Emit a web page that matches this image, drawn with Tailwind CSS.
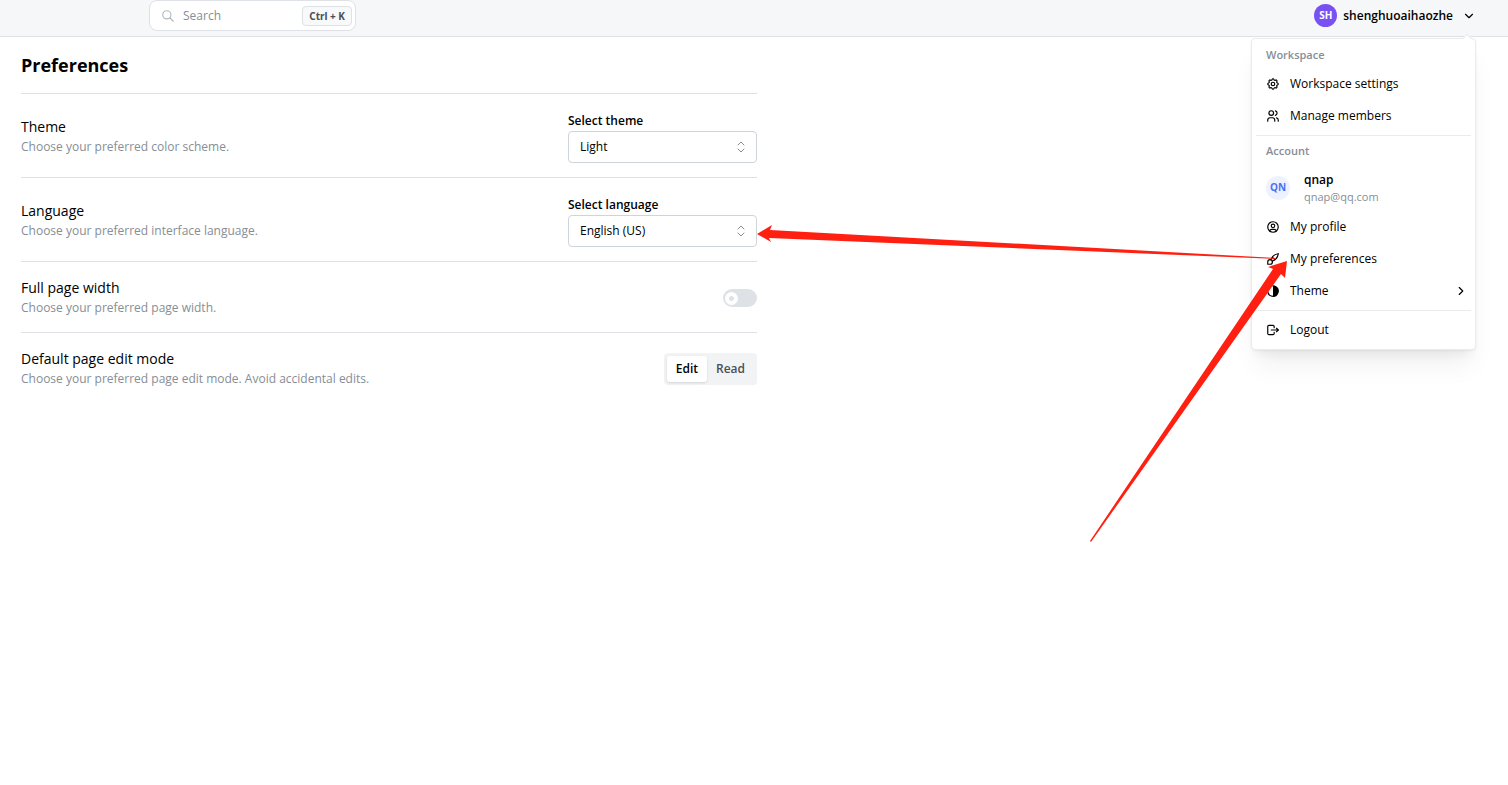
<!DOCTYPE html>
<html lang="en">
<head>
  <meta charset="UTF-8" />
  <meta name="viewport" content="width=device-width, initial-scale=1.0" />
  <title>Preferences</title>
  <script src="https://cdn.jsdelivr.net/npm/@tailwindcss/browser@4"></script>
</head>
<body class="relative min-h-screen bg-white text-black text-[12px] font-['Open_Sans','Noto_Sans',sans-serif]">

  <!-- Top bar -->
  <header class="flex items-start justify-between h-[37px] pl-[149px] pr-8 bg-[#f6f7f9] border-b border-[#dee2e6]">
    <label class="flex items-center w-[207px] h-[31px] pl-[11px] pr-[3px] bg-white border border-[#dee2e6] rounded-lg">
      <svg class="size-[14px] shrink-0 text-[#b4bac1]" viewBox="0 0 24 24" fill="none" stroke="currentColor" stroke-width="2" stroke-linecap="round" stroke-linejoin="round">
        <path d="M3 10a7 7 0 1 0 14 0a7 7 0 1 0 -14 0" />
        <path d="M21 21l-6 -6" />
      </svg>
      <input type="search" aria-label="Search" placeholder="Search" class="flex-1 min-w-0 ml-2 text-[12px] outline-none placeholder:text-[#868e96]" />
      <kbd class="px-[6px] py-px border border-[#dee2e6] rounded bg-[#f8f9fa] text-[10px] leading-4 font-bold text-[#495057] font-['Noto_Sans',sans-serif]">Ctrl + K</kbd>
    </label>

    <div class="relative">
      <button type="button" aria-expanded="true" class="flex items-center h-[31px] gap-[6px]">
        <span class="flex items-center justify-center size-[23px] rounded-full bg-[#7950f2] text-white text-[10px] font-bold">SH</span>
        <span class="text-[12px] font-semibold">shenghuoaihaozhe</span>
        <svg class="size-[14px] ml-[3px]" viewBox="0 0 24 24" fill="none" stroke="currentColor" stroke-width="2" stroke-linecap="round" stroke-linejoin="round">
          <path d="M6 9l6 6l6 -6" />
        </svg>
      </button>

      <!-- Account menu -->
      <div class="absolute top-[38px] right-0 w-[225px] px-1 pt-1 pb-[3px] bg-white border border-[#e9ecef] rounded shadow-[0_1px_3px_rgba(0,0,0,0.05),0_20px_25px_-5px_rgba(0,0,0,0.06),0_10px_10px_-5px_rgba(0,0,0,0.05)]">
        <span class="absolute -top-1 right-[5px] size-[6px] rotate-45 border-t border-l border-[#e9ecef] bg-white"></span>
        <div class="flex items-center h-[25px] px-[10px] text-[11px] font-semibold text-[#868e96]">Workspace</div>
        <a href="#" class="flex items-center h-8 px-[10px] gap-[10px] rounded text-[12px]">
          <svg class="size-[14px]" viewBox="0 0 24 24" fill="none" stroke="currentColor" stroke-width="2" stroke-linecap="round" stroke-linejoin="round">
            <path d="M10.325 4.317c.426 -1.756 2.924 -1.756 3.35 0a1.724 1.724 0 0 0 2.573 1.066c1.543 -.94 3.31 .826 2.37 2.37a1.724 1.724 0 0 0 1.065 2.572c1.756 .426 1.756 2.924 0 3.35a1.724 1.724 0 0 0 -1.066 2.573c.94 1.543 -.826 3.31 -2.37 2.37a1.724 1.724 0 0 0 -2.572 1.065c-.426 1.756 -2.924 1.756 -3.35 0a1.724 1.724 0 0 0 -2.573 -1.066c-1.543 .94 -3.31 -.826 -2.37 -2.37a1.724 1.724 0 0 0 -1.065 -2.572c-1.756 -.426 -1.756 -2.924 0 -3.35a1.724 1.724 0 0 0 1.066 -2.573c-.94 -1.543 .826 -3.31 2.37 -2.37c1 .608 2.296 .07 2.572 -1.065z" />
            <path d="M9 12a3 3 0 1 0 6 0a3 3 0 0 0 -6 0" />
          </svg>
          Workspace settings
        </a>
        <a href="#" class="flex items-center h-8 px-[10px] gap-[10px] rounded text-[12px]">
          <svg class="size-[14px]" viewBox="0 0 24 24" fill="none" stroke="currentColor" stroke-width="2" stroke-linecap="round" stroke-linejoin="round">
            <path d="M9 7m-4 0a4 4 0 1 0 8 0a4 4 0 1 0 -8 0" />
            <path d="M3 21v-2a4 4 0 0 1 4 -4h4a4 4 0 0 1 4 4v2" />
            <path d="M16 3.130a4 4 0 0 1 0 7.750" />
            <path d="M21 21v-2a4 4 0 0 0 -3 -3.850" />
          </svg>
          Manage members
        </a>
        <hr class="my-[3px] border-[#e9ecef]" />
        <div class="flex items-center h-[25px] px-[10px] text-[11px] font-semibold text-[#868e96]">Account</div>
        <div class="flex items-center h-[47px] px-[10px] gap-[14px]">
          <span class="flex items-center justify-center size-6 rounded-full bg-[#edf2ff] text-[#4c6ef5] text-[10px] font-bold">QN</span>
          <div>
            <p class="text-[12px] leading-[18px] font-semibold">qnap</p>
            <p class="text-[11px] leading-4 text-[#868e96]">qnap@qq.com</p>
          </div>
        </div>
        <a href="#" class="flex items-center h-8 px-[10px] gap-[10px] rounded text-[12px]">
          <svg class="size-[14px]" viewBox="0 0 24 24" fill="none" stroke="currentColor" stroke-width="2" stroke-linecap="round" stroke-linejoin="round">
            <path d="M3 12a9 9 0 1 0 18 0a9 9 0 1 0 -18 0" />
            <path d="M9 10a3 3 0 1 0 6 0a3 3 0 1 0 -6 0" />
            <path d="M6.168 18.849a4 4 0 0 1 3.832 -2.849h4a4 4 0 0 1 3.834 2.855" />
          </svg>
          My profile
        </a>
        <a href="#" class="flex items-center h-8 px-[10px] gap-[10px] rounded text-[12px]">
          <svg class="size-[14px]" viewBox="0 0 24 24" fill="none" stroke="currentColor" stroke-width="2" stroke-linecap="round" stroke-linejoin="round">
            <path d="M3 21v-4a4 4 0 1 1 4 4h-4" />
            <path d="M21 3a16 16 0 0 0 -12.800 10.200" />
            <path d="M21 3a16 16 0 0 1 -10.200 12.800" />
            <path d="M10.600 9a9 9 0 0 1 4.400 4.400" />
          </svg>
          My preferences
        </a>
        <a href="#" class="flex items-center h-8 px-[10px] gap-[10px] rounded text-[12px]">
          <svg class="size-[14px]" viewBox="0 0 24 24" fill="currentColor">
            <path d="M17 3.340a10 10 0 1 1 -15 8.660l.005 -.324a10 10 0 0 1 14.995 -8.336m-9 1.732a8 8 0 0 0 4.001 14.928l-.001 -16a8 8 0 0 0 -4 1.072" />
          </svg>
          <span class="flex-1">Theme</span>
          <svg class="size-[14px] -mr-[7px]" viewBox="0 0 24 24" fill="none" stroke="currentColor" stroke-width="2" stroke-linecap="round" stroke-linejoin="round">
            <path d="M9 6l6 6l-6 6" />
          </svg>
        </a>
        <hr class="my-[3px] border-[#e9ecef]" />
        <a href="#" class="flex items-center h-8 px-[10px] gap-[10px] rounded text-[12px]">
          <svg class="size-[14px]" viewBox="0 0 24 24" fill="none" stroke="currentColor" stroke-width="2" stroke-linecap="round" stroke-linejoin="round">
            <path d="M14 8v-2a2 2 0 0 0 -2 -2h-7a2 2 0 0 0 -2 2v12a2 2 0 0 0 2 2h7a2 2 0 0 0 2 -2v-2" />
            <path d="M9 12h12l-3 -3" />
            <path d="M18 15l3 -3" />
          </svg>
          Logout
        </a>
      </div>
    </div>
  </header>

  <!-- Preferences -->
  <main class="max-w-[757px] pl-[21px]">
    <h1 class="pt-[14px] pb-[14px] text-[18px] leading-7 font-bold border-b border-[#dee2e6]">Preferences</h1>

    <section class="flex items-center justify-between gap-4 pt-4 pb-[14px] border-b border-[#dee2e6]">
      <div>
        <h2 class="text-[14px] leading-5">Theme</h2>
        <p class="text-[12px] leading-5 text-[#868e96]">Choose your preferred color scheme.</p>
      </div>
      <div class="w-[189px]">
        <label for="theme" class="block text-[12px] leading-[21px] font-semibold">Select theme</label>
        <div class="relative">
          <select id="theme" class="appearance-none w-full h-8 px-[11px] bg-white border border-[#ced4da] rounded text-[12px]">
            <option>Light</option>
            <option>Dark</option>
            <option>System settings</option>
          </select>
          <svg class="absolute right-2 top-2 size-4 pointer-events-none text-[#868e96]" viewBox="0 0 16 16" fill="none" stroke="currentColor" stroke-linecap="round" stroke-linejoin="round">
            <path d="M5 6l3 -3l3 3M5 10l3 3l3 -3" />
          </svg>
        </div>
      </div>
    </section>

    <section class="flex items-center justify-between gap-4 pt-4 pb-[14px] border-b border-[#dee2e6]">
      <div>
        <h2 class="text-[14px] leading-5">Language</h2>
        <p class="text-[12px] leading-5 text-[#868e96]">Choose your preferred interface language.</p>
      </div>
      <div class="w-[189px]">
        <label for="language" class="block text-[12px] leading-[21px] font-semibold">Select language</label>
        <div class="relative">
          <select id="language" class="appearance-none w-full h-8 px-[11px] bg-white border border-[#ced4da] rounded text-[12px]">
            <option>English (US)</option>
          </select>
          <svg class="absolute right-2 top-2 size-4 pointer-events-none text-[#868e96]" viewBox="0 0 16 16" fill="none" stroke="currentColor" stroke-linecap="round" stroke-linejoin="round">
            <path d="M5 6l3 -3l3 3M5 10l3 3l3 -3" />
          </svg>
        </div>
      </div>
    </section>

    <section class="flex items-center justify-between gap-4 pt-4 pb-[14px] border-b border-[#dee2e6]">
      <div>
        <h2 class="text-[14px] leading-5"><label for="full-width">Full page width</label></h2>
        <p class="text-[12px] leading-5 text-[#868e96]">Choose your preferred page width.</p>
      </div>
      <input id="full-width" type="checkbox" role="switch" class="appearance-none flex items-center w-[34px] h-[18px] px-[2px] rounded-full bg-[#dee2e6] before:size-[13px] before:rounded-full before:border-4 before:border-white checked:bg-blue-500 checked:before:ml-auto" />
    </section>

    <section class="flex items-center justify-between gap-4 pt-4 pb-[14px]">
      <div>
        <h2 class="text-[14px] leading-5">Default page edit mode</h2>
        <p class="text-[12px] leading-5 text-[#868e96]">Choose your preferred page edit mode. Avoid accidental edits.</p>
      </div>
      <div role="radiogroup" aria-label="Default page edit mode" class="flex p-[3px] rounded bg-[#f1f3f5] text-[12px] leading-[26px] font-semibold text-[#495057]">
        <label class="px-[9px] rounded-[3px] has-checked:bg-white has-checked:text-black has-checked:shadow-sm">
          <input type="radio" name="edit-mode" value="edit" class="sr-only" checked />Edit
        </label>
        <label class="px-[9px] rounded-[3px] has-checked:bg-white has-checked:text-black has-checked:shadow-sm">
          <input type="radio" name="edit-mode" value="read" class="sr-only" />Read
        </label>
      </div>
    </section>
  </main>

  <!-- Arrows pointing from the menu item to the language select -->
  <svg class="absolute top-0 right-0 w-[751px] h-[560px] pointer-events-none" viewBox="757 0 751 560" fill="#ff2012" aria-hidden="true">
    <path d="M757 234L772 225L770 230L1276 258L1276 259L769 238L771 242Z" />
    <path d="M1287 261L1285 278L1281 274L1091 542L1090 541L1273 269L1268 267Z" />
  </svg>
</body>
</html>
